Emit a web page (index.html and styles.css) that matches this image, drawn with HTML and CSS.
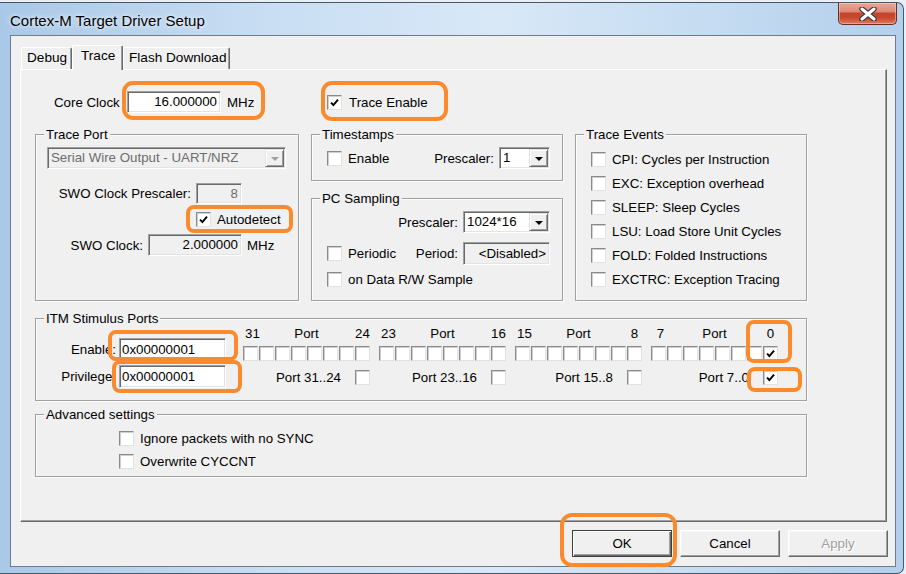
FILE: index.html
```html
<!DOCTYPE html>
<html>
<head>
<meta charset="utf-8">
<title>Cortex-M Target Driver Setup</title>
<link rel="stylesheet" href="styles.css">
</head>
<body>
<div class="screen">
  <div class="window">
    <div class="titlebar">
      <span class="title">Cortex-M Target Driver Setup</span>
      <div class="close">
        <svg width="22" height="14" viewBox="0 0 22 14"><path d="M5 2 L17 12 M17 2 L5 12" stroke="#3a3a44" stroke-width="5.5" stroke-linecap="round"/><path d="M5 2 L17 12 M17 2 L5 12" stroke="#fff" stroke-width="3" stroke-linecap="round"/></svg>
      </div>
    </div>
    <div class="client">
      <div class="tabs">
        <div class="tab">Debug</div>
        <div class="tab active">Trace</div>
        <div class="tab">Flash Download</div>
      </div>
      <div class="panel">
        <div class="top-row">
          <div class="core-clock">
            <span class="cc-lbl">Core Clock</span>
            <div class="field right w94">16.000000</div>
            <span class="unit">MHz</span>
          </div>
          <div class="check"><span class="cb"><svg class="ck" viewBox="0 0 9 9"><path d="M1 4.6 L3.4 7 L8 1.6" fill="none" stroke="#000" stroke-width="1.9"/></svg></span>Trace Enable</div>
        </div>

        <div class="groups-row">
          <div class="grp tp">
            <div class="gtitle">Trace Port</div>
            <div class="combo disabled tp-combo"><span class="combo-text">Serial Wire Output - UART/NRZ</span><span class="combo-btn"><i class="tri"></i></span></div>
            <div class="tp-a"><span class="rlbl w155">SWO Clock Prescaler:</span><div class="field ro gray right w46">8</div></div>
            <div class="tp-b check"><span class="cb"><svg class="ck" viewBox="0 0 9 9"><path d="M1 4.6 L3.4 7 L8 1.6" fill="none" stroke="#000" stroke-width="1.9"/></svg></span>Autodetect</div>
            <div class="tp-c"><span class="rlbl w107">SWO Clock:</span><div class="field ro right w94">2.000000</div><span class="unit">MHz</span></div>
          </div>

          <div class="mid-col">
            <div class="grp ts">
              <div class="gtitle">Timestamps</div>
              <div class="ts-row">
                <div class="check"><span class="cb"></span>Enable</div>
                <span class="push">Prescaler:</span>
                <div class="combo w51"><span class="combo-text">1</span><span class="combo-btn"><i class="tri"></i></span></div>
              </div>
            </div>
            <div class="grp pcs">
              <div class="gtitle">PC Sampling</div>
              <div class="pcs-r1">
                <span>Prescaler:</span>
                <div class="combo w87"><span class="combo-text">1024*16</span><span class="combo-btn"><i class="tri"></i></span></div>
              </div>
              <div class="pcs-r2">
                <div class="check"><span class="cb"></span>Periodic</div>
                <span class="push">Period:</span>
                <div class="field ro right w87 h23">&lt;Disabled&gt;</div>
              </div>
              <div class="pcs-r3 check"><span class="cb"></span>on Data R/W Sample</div>
            </div>
          </div>

          <div class="grp te">
            <div class="gtitle">Trace Events</div>
            <div class="te-list">
              <div class="check te-row"><span class="cb"></span>CPI: Cycles per Instruction</div>
              <div class="check te-row"><span class="cb"></span>EXC: Exception overhead</div>
              <div class="check te-row"><span class="cb"></span>SLEEP: Sleep Cycles</div>
              <div class="check te-row"><span class="cb"></span>LSU: Load Store Unit Cycles</div>
              <div class="check te-row"><span class="cb"></span>FOLD: Folded Instructions</div>
              <div class="check te-row"><span class="cb"></span>EXCTRC: Exception Tracing</div>
            </div>
          </div>
        </div>

        <div class="grp itm">
          <div class="gtitle">ITM Stimulus Ports</div>
          <div class="itm-body">
            <div class="itm-left">
              <div class="itm-field"><span class="rlbl w60">Enable:</span><div class="field w107">0x00000001</div></div>
              <div class="itm-field second"><span class="rlbl w60">Privilege:</span><div class="field w107">0x00000001</div></div>
            </div>
            <div class="itm-right">
              <div class="port-head">
                <div class="ph"><span class="n1">31</span><span class="pw">Port</span><span class="n8">24</span></div>
                <div class="ph"><span class="n1">23</span><span class="pw">Port</span><span class="n8">16</span></div>
                <div class="ph"><span class="n1">15</span><span class="pw">Port</span><span class="n8">8</span></div>
                <div class="ph"><span class="n1">7</span><span class="pw">Port</span><span class="n8">0</span></div>
              </div>
              <div class="port-bits">
                <div class="pb"><span class="cb"></span><span class="cb"></span><span class="cb"></span><span class="cb"></span><span class="cb"></span><span class="cb"></span><span class="cb"></span><span class="cb"></span></div>
                <div class="pb"><span class="cb"></span><span class="cb"></span><span class="cb"></span><span class="cb"></span><span class="cb"></span><span class="cb"></span><span class="cb"></span><span class="cb"></span></div>
                <div class="pb"><span class="cb"></span><span class="cb"></span><span class="cb"></span><span class="cb"></span><span class="cb"></span><span class="cb"></span><span class="cb"></span><span class="cb"></span></div>
                <div class="pb"><span class="cb"></span><span class="cb"></span><span class="cb"></span><span class="cb"></span><span class="cb"></span><span class="cb"></span><span class="cb"></span><span class="cb"><svg class="ck" viewBox="0 0 9 9"><path d="M1 4.6 L3.4 7 L8 1.6" fill="none" stroke="#000" stroke-width="1.9"/></svg></span></div>
              </div>
              <div class="port-priv">
                <div class="pp">Port 31..24<span class="cb"></span></div>
                <div class="pp">Port 23..16<span class="cb"></span></div>
                <div class="pp">Port 15..8<span class="cb"></span></div>
                <div class="pp">Port 7..0<span class="cb"><svg class="ck" viewBox="0 0 9 9"><path d="M1 4.6 L3.4 7 L8 1.6" fill="none" stroke="#000" stroke-width="1.9"/></svg></span></div>
              </div>
            </div>
          </div>
        </div>

        <div class="grp adv">
          <div class="gtitle">Advanced settings</div>
          <div class="adv-list">
            <div class="check adv-row"><span class="cb"></span>Ignore packets with no SYNC</div>
            <div class="check adv-row"><span class="cb"></span>Overwrite CYCCNT</div>
          </div>
        </div>
      </div>

      <div class="buttons">
        <div class="btn default">OK</div>
        <div class="btn">Cancel</div>
        <div class="btn disabled">Apply</div>
      </div>
    </div>
  </div>

  <div class="mark m-core"></div>
  <div class="mark m-trace"></div>
  <div class="mark m-auto"></div>
  <div class="mark m-en"></div>
  <div class="mark m-priv"></div>
  <div class="mark m-bit0"></div>
  <div class="mark m-p0"></div>
  <div class="mark m-ok"></div>
</div>
</body>
</html>
```

FILE: styles.css
```css
* { box-sizing: border-box; }
body {
  margin: 0;
  background: #e4ecf4;
  font-family: "Liberation Sans", Arial, sans-serif;
  font-size: 13.3px;
  color: #000;
}
.screen {
  position: relative;
  width: 906px;
  height: 574px;
  overflow: hidden;
  background: #e9eff5;
}

/* window frame */
.window {
  margin-top: 2px;
  width: 904px;
  height: 572px;
  border: 1px solid #4a5866;
  border-left: none;
  border-radius: 0 7px 7px 0;
  padding: 0 7px 6px 10px;
  background: linear-gradient(90deg, #a9c8e7 0%, #c9def3 30%, #d8e8f7 55%, #c4dbf1 80%, #b3cfeb 100%);
  display: flex;
  flex-direction: column;
}
.titlebar {
  height: 32px;
  display: flex;
  justify-content: space-between;
  align-items: flex-start;
}
.title {
  margin-top: 10px;
  line-height: 16px;
  font-size: 15px;
  color: #000;
  text-shadow: 0 0 6px #eaf3fc, 0 0 3px #eaf3fc;
}
.close {
  width: 59px;
  height: 22px;
  margin-right: -1px;
  border: 1px solid #6b2b20;
  border-top: none;
  border-radius: 0 0 5px 5px;
  background: linear-gradient(#e8a898 0%, #dc8a76 40%, #c4452c 50%, #c8482d 70%, #dd7b5e 100%);
  box-shadow: inset 0 0 0 1px rgba(255,220,210,0.45);
  display: flex;
  align-items: center;
  justify-content: center;
}
.client {
  width: 886px;
  height: 532px;
  border: 1px solid #6d7b8a;
  background: #f0f0f0;
  padding: 9px 0 0 0;
  display: flex;
  flex-direction: column;
}

/* tabs */
.tabs {
  display: flex;
  align-items: flex-end;
  height: 24px;
  padding-left: 10px;
}
.tab {
  height: 22px;
  line-height: 20px;
  padding: 0 5px;
  border: 1px solid #fff;
  border-bottom: none;
  border-right-color: #696969;
  border-radius: 2px 2px 0 0;
  box-shadow: inset -1px 0 0 #a0a0a0;
  background: #f0f0f0;
  white-space: nowrap;
  font-size: 13.6px;
}
.tab:nth-child(1) { width: 51px; }
.tab.active {
  width: 51px;
  height: 25px;
  margin-bottom: -1px;
  line-height: 20px;
  padding-left: 8px;
  position: relative;
  z-index: 1;
}
.tab:nth-child(3) { width: 107px; }

.panel {
  margin-left: 9px;
  width: 867px;
  height: 453px;
  border: 1px solid #fff;
  border-right-color: #696969;
  border-bottom-color: #696969;
  box-shadow: inset -1px -1px 0 #a0a0a0;
  background: #f0f0f0;
}

/* generic controls */
.cb {
  flex: none;
  width: 15px;
  height: 15px;
  background: #fff;
  border: 1px solid;
  border-color: #8a8a8a #e2e2e2 #e2e2e2 #8a8a8a;
  box-shadow: inset 1px 1px 0 #cfcfcf;
  display: inline-flex;
  align-items: center;
  justify-content: center;
}
.ck { width: 9px; height: 9px; display: block; }
.check {
  display: flex;
  align-items: center;
  white-space: nowrap;
}
.check .cb { margin-right: 6px; }

.field {
  height: 22px;
  line-height: 18px;
  background: #fff;
  border: 1px solid;
  border-color: #a0a0a0 #fff #fff #a0a0a0;
  box-shadow: inset 1px 1px 0 #696969, inset -1px -1px 0 #e3e3e3;
  padding: 1px 3px;
  white-space: nowrap;
  overflow: hidden;
}
.field.right { text-align: right; }
.field.ro { background: #f0f0f0; }
.field.gray { color: #6d6d6d; }
.h23 { height: 23px; line-height: 19px; }

.combo {
  height: 22px;
  display: flex;
  background: #fff;
  border: 1px solid;
  border-color: #a0a0a0 #fff #fff #a0a0a0;
  box-shadow: inset 1px 1px 0 #696969, inset -1px -1px 0 #e3e3e3;
  padding: 1px;
}
.combo-text {
  flex: 1;
  line-height: 18px;
  padding-left: 2px;
  white-space: nowrap;
  overflow: hidden;
}
.combo-btn {
  width: 19px;
  height: 18px;
  background: #f0f0f0;
  border: 1px solid;
  border-color: #e3e3e3 #696969 #696969 #e3e3e3;
  box-shadow: inset 1px 1px 0 #fff, inset -1px -1px 0 #a0a0a0;
  display: flex;
  align-items: center;
  justify-content: center;
}
.tri {
  width: 0;
  height: 0;
  border-left: 4px solid transparent;
  border-right: 4px solid transparent;
  border-top: 4px solid #000;
  margin-top: 1px;
}
.combo.disabled { background: #f0f0f0; }
.combo.disabled .combo-text { color: #6d6d6d; }
.combo.disabled .tri { border-top-color: #a0a0a0; }

.rlbl { flex: none; text-align: right; white-space: nowrap; }
.w46 { width: 46px; }
.w51 { width: 51px; }
.w60 { width: 60px; }
.w87 { width: 87px; }
.w94 { width: 94px; }
.w107 { width: 107px; }
.w155 { width: 155px; }

/* group boxes */
.grp {
  border: 1px solid #a0a0a0;
  box-shadow: inset 1px 1px 0 #fcfcfc, 1px 1px 0 #fcfcfc;
}
.gtitle {
  display: table;
  margin: -8px 0 0 8px;
  padding: 0 2px;
  line-height: 15px;
  height: 15px;
  background: #f0f0f0;
  white-space: nowrap;
}

/* top row */
.top-row {
  margin-top: 21px;
  height: 22px;
  padding-left: 33px;
  display: flex;
  align-items: center;
}
.core-clock {
  width: 273px;
  display: flex;
  align-items: center;
}
.cc-lbl { width: 73px; white-space: nowrap; }
.unit { margin-left: 6px; }
.top-row .check .cb { margin-right: 7px; }

/* groups row */
.groups-row {
  margin-top: 21px;
  padding-left: 14px;
  display: flex;
  gap: 12px;
}
.tp { width: 264px; height: 167px; }
.mid-col { width: 252px; display: flex; flex-direction: column; }
.te { width: 232px; height: 167px; }

.tp-combo { margin: 5px 0 0 11px; width: 239px; }
.tp-a { margin-top: 14px; height: 21px; display: flex; align-items: center; }
.tp-a .field { height: 21px; line-height: 17px; }
.tp-a .rlbl { margin-right: 5px; }
.tp-b { margin-top: 8px; height: 15px; padding-left: 160px; }
.tp-c { margin-top: 7px; height: 22px; display: flex; align-items: center; }
.tp-c .rlbl { margin-right: 5px; }
.tp-c .unit { margin-left: 5px; }

.ts { height: 47px; }
.ts-row {
  margin-top: 5px;
  height: 22px;
  padding: 0 12px 0 15px;
  display: flex;
  align-items: center;
}
.push { margin-left: auto; margin-right: 5px; }

.pcs { margin-top: 17px; height: 103px; }
.pcs-r1 {
  margin-top: 5px;
  height: 22px;
  padding-right: 12px;
  display: flex;
  align-items: center;
  justify-content: flex-end;
  gap: 5px;
}
.pcs-r2 {
  margin-top: 9px;
  height: 23px;
  padding: 0 12px 0 15px;
  display: flex;
  align-items: center;
}
.pcs-r3 { margin-top: 7px; height: 15px; padding-left: 15px; }

.te-list { margin-top: 5px; padding-left: 15px; }
.te-row { height: 24px; }

/* ITM */
.itm {
  margin: 17px 0 0 14px;
  width: 772px;
  height: 83px;
}
.itm-body { display: flex; }
.itm-left { margin-left: 20px; padding-top: 12px; }
.itm-field { display: flex; align-items: center; }
.itm-field .rlbl { margin-right: 3px; }
.itm-field .field { height: 23px; line-height: 19px; padding-left: 2px; }
.itm-field.second { margin-top: 4px; }
.itm-right { margin-left: 17px; }
.port-head, .port-bits, .port-priv { display: flex; gap: 9px; }
.ph {
  width: 127px;
  height: 16px;
  line-height: 16px;
  display: grid;
  grid-template-columns: 17px 1fr 17px;
}
.n1 { text-align: center; padding-left: 2px; }
.pw { text-align: center; }
.n8 { text-align: center; padding-left: 2px; }
.port-bits { margin-top: 4px; }
.pb { width: 127px; display: flex; gap: 1px; }
.port-priv { margin-top: 9px; }
.pp {
  width: 127px;
  height: 15px;
  display: flex;
  align-items: center;
  justify-content: flex-end;
  gap: 14px;
  white-space: nowrap;
}

/* advanced */
.adv {
  margin: 13px 0 0 14px;
  width: 772px;
  height: 63px;
}
.adv-list { margin-top: 5px; padding-left: 83px; }
.adv-row { height: 23px; }

/* buttons */
.buttons {
  margin-top: 8px;
  padding-right: 7px;
  display: flex;
  justify-content: flex-end;
  gap: 8px;
}
.btn {
  width: 100px;
  height: 27px;
  line-height: 25px;
  text-align: center;
  background: #f0f0f0;
  border: 1px solid;
  border-color: #fff #696969 #696969 #fff;
  box-shadow: inset -1px -1px 0 #a0a0a0, inset 1px 1px 0 #f8f8f8;
}
.btn.default {
  border: 1px solid #3f3f3f;
  box-shadow: inset 1px 1px 0 #fff, inset -1px -1px 0 #696969, inset -2px -2px 0 #a0a0a0;
}
.btn.disabled { color: #a0a0a0; text-shadow: 1px 1px 0 #fff; }

/* orange annotation outlines */
.mark {
  position: absolute;
  border: 4px solid #fb8a2d;
  border-radius: 11px;
}
.m-core { left: 122px; top: 81px; width: 143px; height: 39px; }
.m-trace { left: 321px; top: 81px; width: 127px; height: 40px; }
.m-auto { left: 186px; top: 205px; width: 107px; height: 28px; border-radius: 8px; }
.m-en { left: 108px; top: 330px; width: 130px; height: 31px; border-radius: 8px; }
.m-priv { left: 112px; top: 360px; width: 130px; height: 33px; border-radius: 8px; }
.m-bit0 { left: 746px; top: 320px; width: 46px; height: 43px; border-radius: 8px; }
.m-p0 { left: 747px; top: 367px; width: 55px; height: 25px; border-radius: 8px; }
.m-ok { left: 560px; top: 513px; width: 117px; height: 54px; border-radius: 12px; }
```
